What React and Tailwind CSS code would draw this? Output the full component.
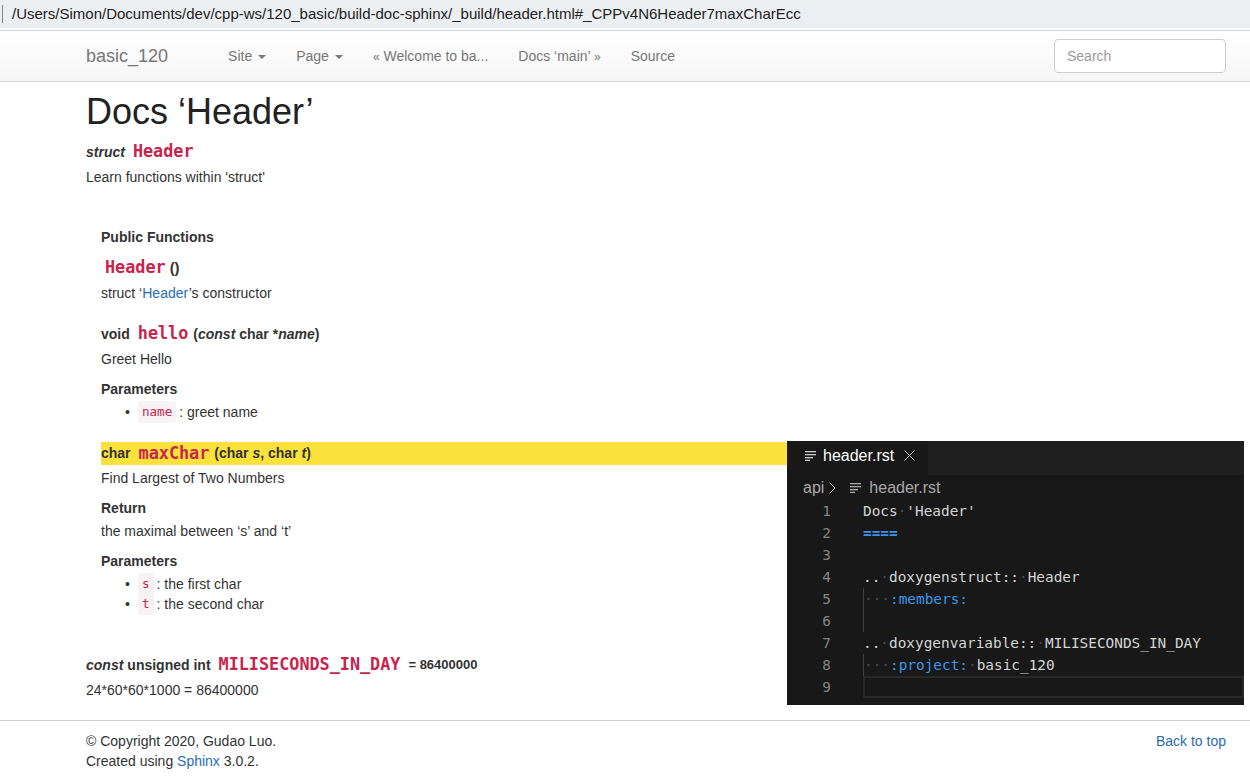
import { useState } from 'react'

const SANS = "font-['Liberation_Sans',Arial,sans-serif]"
const MONO = "font-['DejaVu_Sans_Mono',monospace]"

function Caret() {
  return <span className="ml-[6px] inline-block h-0 w-0 border-x-4 border-t-4 border-x-transparent border-t-[#777] align-middle" />
}

function Name({ children }) {
  return <span className={`${MONO} text-[16.8px] font-bold text-[#c7254e]`}>{children}</span>
}

function Code({ children }) {
  return <code className={`${MONO} rounded bg-[#f9f2f4] px-1 py-[2px] text-[12.6px] text-[#c7254e]`}>{children}</code>
}

function Bullet({ name, text }) {
  return (
    <li className="flex h-5 items-center pl-[24px]">
      <span className="mr-[8px] text-[14px]">•</span>
      <Code>{name}</Code>
      <span className="ml-[3px]">: {text}</span>
    </li>
  )
}

const WS = ({ n = 1 }) => <span className="text-[#4a4a4a]">{'·'.repeat(n)}</span>

const LINES = [
  <>Docs<WS />'Header'</>,
  <span className="font-bold text-[#3b8eea]">====</span>,
  null,
  <>..<WS />doxygenstruct::<WS />Header</>,
  <><WS n={3} /><span className="text-[#3b96ea]">:members:</span></>,
  null,
  <>..<WS />doxygenvariable::<WS />MILISECONDS_IN_DAY</>,
  <><WS n={3} /><span className="text-[#3b96ea]">:project:</span><WS />basic_120</>,
  null,
]

function FileIcon() {
  return (
    <svg width="11" height="10" viewBox="0 0 11 10" className="shrink-0">
      <rect x="0" y="0" width="11" height="1.3" fill="currentColor" />
      <rect x="0" y="3" width="11" height="1.3" fill="currentColor" />
      <rect x="0" y="6" width="8" height="1.3" fill="currentColor" />
      <rect x="0" y="8.7" width="5" height="1.3" fill="currentColor" />
    </svg>
  )
}

function EditorPanel() {
  return (
    <div className={`absolute left-[787px] top-[441px] h-[264px] w-[457px] bg-[#181818] ${SANS}`}>
      <div className="flex h-[34px] bg-[#1f1f1f]">
        <div className="flex h-full w-[141px] items-start bg-[#181818] pl-[18px] pt-[5px]">
          <span className="mt-[5px] text-[#cccccc]"><FileIcon /></span>
          <span className="ml-[7px] text-[16px] leading-[20px] text-white">header.rst</span>
          <svg width="11" height="11" viewBox="0 0 11 11" className="ml-[10px] mt-[4px] text-[#c5c5c5]">
            <path d="M0.5 0.5 L10.5 10.5 M10.5 0.5 L0.5 10.5" stroke="currentColor" strokeWidth="1" />
          </svg>
        </div>
      </div>
      <div className="flex h-[25px] items-center pl-[16px] text-[16px] text-[#a9a9a9]">
        <span>api</span>
        <svg width="7" height="12" viewBox="0 0 7 12" className="ml-[5px] mr-[14px]">
          <path d="M0.5 0.5 L6 6 L0.5 11.5" fill="none" stroke="currentColor" strokeWidth="1" />
        </svg>
        <span className="mr-[8px]"><FileIcon /></span>
        <span>header.rst</span>
      </div>
      <div className={`${MONO} text-[14.4px] leading-[22px] text-[#d4d4d4]`}>
        {LINES.map((line, i) => {
          const guide = i === 4 || i === 5 || i === 7
          const current = i === 8
          return (
            <div key={i} className="flex h-[22px]">
              <span className="w-[44px] shrink-0 text-right text-[#858585]">{i + 1}</span>
              <div className={`ml-[32px] flex-1 whitespace-pre ${guide ? 'border-l border-[#404040]' : ''} ${current ? 'border-2 border-[#282828]' : ''}`}>
                {line}
              </div>
            </div>
          )
        })}
      </div>
    </div>
  )
}

export default function App() {
  const [query, setQuery] = useState('')

  return (
    <div className={`relative h-[776px] w-[1250px] overflow-hidden bg-white text-[14px] text-[#333] ${SANS}`}>
      <div className="relative flex h-[28px] items-center bg-[#eceff1] pl-[12px] text-[15px] text-[#222]">
        <span className="absolute left-[2px] top-[5px] h-[18px] w-px bg-[#888]" />
        /Users/Simon/Documents/dev/cpp-ws/120_basic/build-doc-sphinx/_build/header.html#_CPPv4N6Header7maxCharEcc
      </div>
      <div className="h-[3px] border-b border-[#d6d6d6] bg-white" />

      <nav className="flex h-[51px] items-center border-b border-[#d8d8d8] bg-gradient-to-b from-white to-[#f6f6f6] pl-[86px] pr-[24px] text-[#777]">
        <span className="text-[18px]">basic_120</span>
        <ul className="ml-[60px] flex items-center gap-[30px] text-[14px]">
          <li>Site<Caret /></li>
          <li>Page<Caret /></li>
          <li><span className="text-[12px]">«</span> Welcome to ba...</li>
          <li>Docs ‘main’ <span className="text-[12px]">»</span></li>
          <li>Source</li>
        </ul>
        <input
          value={query}
          onChange={(e) => setQuery(e.target.value)}
          placeholder="Search"
          className="ml-auto h-[34px] w-[172px] rounded border border-[#ccc] bg-white px-3 text-[14px] text-[#555] placeholder:text-[#999] focus:outline-none"
        />
      </nav>

      <main className="pl-[86px]">
        <h1 className="mt-[10px] h-[40px] text-[36px] font-medium leading-[40px] text-[#222]">Docs ‘Header’</h1>

        <div className="mt-[8px] flex h-[24px] items-center">
          <em className="font-bold">struct</em>
          <span className="ml-[8px]"><Name>Header</Name></span>
        </div>
        <p className="mt-[3px] h-5 leading-5">Learn functions within 'struct'</p>

        <div className="ml-[15px]">
          <p className="mt-[40px] h-5 font-bold leading-5">Public Functions</p>

          <div className="mt-[9px] flex h-[24px] items-center pl-[4px] font-bold">
            <Name>Header</Name>
            <span className="ml-[4px] text-[15px]">()</span>
          </div>
          <p className="mt-[3px] h-5 leading-5">struct ‘<a className="text-[#2a6cb3]">Header</a>’s constructor</p>

          <div className="mt-[19px] flex h-[24px] items-center font-bold">
            void
            <span className="ml-[8px]"><Name>hello</Name></span>
            <span className="ml-[5px]">(<em>const</em> char *<em>name</em>)</span>
          </div>
          <p className="mt-[3px] h-5 leading-5">Greet Hello</p>
          <p className="mt-[10px] h-5 font-bold leading-5">Parameters</p>
          <ul className="mt-[3px]">
            <Bullet name="name" text="greet name" />
          </ul>

          <div className="mt-[20px] flex h-[23px] w-[686px] items-center bg-[#fae13c] font-bold">
            char
            <span className="ml-[8px]"><Name>maxChar</Name></span>
            <span className="ml-[5px]">(char <em>s</em>, char <em>t</em>)</span>
          </div>
          <p className="mt-[3px] h-5 leading-5">Find Largest of Two Numbers</p>
          <p className="mt-[10px] h-5 font-bold leading-5">Return</p>
          <p className="mt-[3px] h-5 leading-5">the maximal between ‘s’ and ‘t’</p>
          <p className="mt-[10px] h-5 font-bold leading-5">Parameters</p>
          <ul className="mt-[3px]">
            <Bullet name="s" text="the first char" />
            <Bullet name="t" text="the second char" />
          </ul>
        </div>

        <div className="mt-[39px] flex h-[24px] items-center font-bold">
          <em>const</em>
          <span className="ml-[4px]">unsigned int</span>
          <span className="ml-[8px]"><Name>MILISECONDS_IN_DAY</Name></span>
          <span className="ml-[8px] text-[13px]">= 86400000</span>
        </div>
        <p className="mt-[3px] h-5 leading-5">24*60*60*1000 = 86400000</p>
      </main>

      <footer className="mt-[20px] border-t border-[#ccc] pt-[10px]">
        <div className="flex pl-[86px] pr-[24px]">
          <div className="leading-5">
            <p>© Copyright 2020, Gudao Luo.</p>
            <p>Created using <a className="text-[#2a6cb3]">Sphinx</a> 3.0.2.</p>
          </div>
          <a className="ml-auto leading-5 text-[#2a6cb3]">Back to top</a>
        </div>
      </footer>

      <EditorPanel />
    </div>
  )
}
